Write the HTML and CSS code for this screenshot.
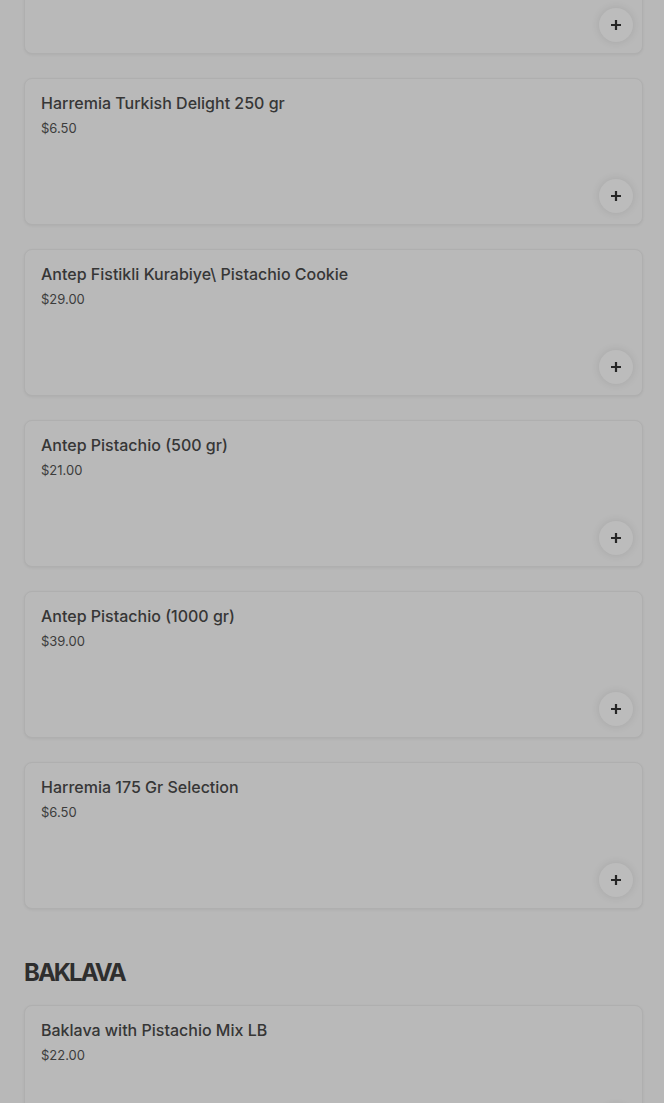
FILE: index.html
```html
<!DOCTYPE html>
<html lang="en">
<head>
<meta charset="utf-8">
<title>Menu</title>
<link rel="stylesheet" href="styles.css">
</head>
<body>
<main class="menu">
  <div class="list list-first">
    <div class="card">
      <button class="add" aria-label="Add"><svg viewBox="0 0 12 12" width="12" height="12"><path d="M6 1v10M1 6h10" stroke="currentColor" stroke-width="2.2" fill="none"/></svg></button>
    </div>
    <div class="card">
      <div class="info">
        <div class="name">Harremia Turkish Delight 250 gr</div>
        <div class="price">$6.50</div>
      </div>
      <button class="add" aria-label="Add"><svg viewBox="0 0 12 12" width="12" height="12"><path d="M6 1v10M1 6h10" stroke="currentColor" stroke-width="2.2" fill="none"/></svg></button>
    </div>
    <div class="card">
      <div class="info">
        <div class="name">Antep Fistikli Kurabiye\ Pistachio Cookie</div>
        <div class="price">$29.00</div>
      </div>
      <button class="add" aria-label="Add"><svg viewBox="0 0 12 12" width="12" height="12"><path d="M6 1v10M1 6h10" stroke="currentColor" stroke-width="2.2" fill="none"/></svg></button>
    </div>
    <div class="card">
      <div class="info">
        <div class="name">Antep Pistachio (500 gr)</div>
        <div class="price">$21.00</div>
      </div>
      <button class="add" aria-label="Add"><svg viewBox="0 0 12 12" width="12" height="12"><path d="M6 1v10M1 6h10" stroke="currentColor" stroke-width="2.2" fill="none"/></svg></button>
    </div>
    <div class="card">
      <div class="info">
        <div class="name">Antep Pistachio (1000 gr)</div>
        <div class="price">$39.00</div>
      </div>
      <button class="add" aria-label="Add"><svg viewBox="0 0 12 12" width="12" height="12"><path d="M6 1v10M1 6h10" stroke="currentColor" stroke-width="2.2" fill="none"/></svg></button>
    </div>
    <div class="card">
      <div class="info">
        <div class="name">Harremia 175 Gr Selection</div>
        <div class="price">$6.50</div>
      </div>
      <button class="add" aria-label="Add"><svg viewBox="0 0 12 12" width="12" height="12"><path d="M6 1v10M1 6h10" stroke="currentColor" stroke-width="2.2" fill="none"/></svg></button>
    </div>
  </div>

  <h2 class="section-title">BAKLAVA</h2>

  <div class="list">
    <div class="card">
      <div class="info">
        <div class="name">Baklava with Pistachio Mix LB</div>
        <div class="price">$22.00</div>
      </div>
      <button class="add" aria-label="Add"><svg viewBox="0 0 12 12" width="12" height="12"><path d="M6 1v10M1 6h10" stroke="currentColor" stroke-width="2.2" fill="none"/></svg></button>
    </div>
  </div>
</main>
</body>
</html>
```

FILE: styles.css
```css
html, body {
  margin: 0;
  padding: 0;
}

body {
  background: #b8b8b8;
  font-family: Inter, "Liberation Sans", sans-serif;
  color: #2f2f2f;
  overflow: hidden;
}

.menu {
  padding: 0 21px 0 24px;
}

.list {
  display: flex;
  flex-direction: column;
  gap: 24px;
}

.list-first {
  margin-top: -93px;
}

.card {
  box-sizing: border-box;
  height: 147px;
  display: flex;
  flex-direction: column;
  padding: 12px 9px 11px 16px;
  border: 1px solid #afafaf;
  border-radius: 8px;
  background: #b9b9b9;
  box-shadow: 0 1px 3px rgba(0, 0, 0, 0.06);
}

.info {
  display: flex;
  flex-direction: column;
  gap: 3px;
}

.name {
  font-size: 16px;
  line-height: 24px;
  font-weight: 500;
  color: #363636;
  letter-spacing: 0;
}

.price {
  font-size: 13px;
  line-height: 20px;
  color: #3c3c3c;
  letter-spacing: 0;
}

.add {
  margin-top: auto;
  align-self: flex-end;
  width: 34px;
  height: 34px;
  border-radius: 50%;
  border: none;
  padding: 0;
  background: #bcbcbc;
  color: #262626;
  box-shadow: 0 0 8px rgba(0, 0, 0, 0.10);
  display: flex;
  align-items: center;
  justify-content: center;
}

.section-title {
  margin: 48px 0 16px;
  font-size: 24px;
  line-height: 32px;
  font-weight: 700;
  letter-spacing: -2px;
  color: #2e2e2e;
}
```
